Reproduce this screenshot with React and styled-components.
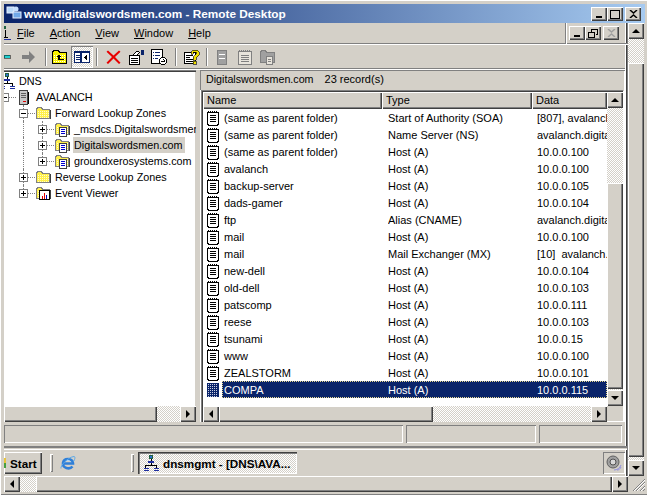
import React from "react";
import styled, { createGlobalStyle, css } from "styled-components";

const FACE = "#d4d0c8";
const NAVY = "#0a246a";

const GlobalStyle = createGlobalStyle`
  html, body {
    margin: 0;
    padding: 0;
    background: ${FACE};
    overflow: hidden;
  }
  * {
    box-sizing: border-box;
  }
`;

const raised = css`
  background-color: ${FACE};
  box-shadow: inset 1px 1px 0 #fff, inset -1px -1px 0 #404040, inset -2px -2px 0 #808080;
`;

const dither = css`
  background: repeating-conic-gradient(#fff 0 25%, ${FACE} 0 50%) 0 0 / 2px 2px;
`;

const Desktop = styled.div`
  position: relative;
  width: 647px;
  height: 495px;
  padding: 4px 2px 3px 4px;
  display: flex;
  flex-direction: column;
  overflow: hidden;
  background: ${FACE};
  box-shadow: inset 0 1px 0 #fff, inset 1px 0 0 #fff, inset 0 -1px 0 #808080;
  font-family: "Liberation Sans", Arial, sans-serif;
  font-size: 11px;
  color: #000;
`;

const TitleBar = styled.div`
  height: 19px;
  flex: none;
  display: flex;
  align-items: center;
  background: linear-gradient(90deg, ${NAVY} 0%, #a6caf0 100%);
  color: #fff;
  font-weight: 700;
  font-size: 11.8px;
  white-space: nowrap;
`;

const TitleIcon = styled.svg`
  width: 17px;
  height: 17px;
  margin: 0 1px 0 2px;
  flex: none;
`;

const TitleText = styled.span`
  flex: 1;
`;

const CaptionButtons = styled.div`
  display: flex;
  margin-right: 4px;
  align-items: center;
`;

const CaptionButton = styled.div`
  ${raised}
  width: 16px;
  height: 14px;
  margin-left: ${(p) => (p.$gap ? "2px" : "0")};
  display: flex;
  align-items: center;
  justify-content: center;
  flex: none;
`;

const Body = styled.div`
  height: 453px;
  flex: none;
  display: flex;
`;

const InnerWindow = styled.div`
  width: 624px;
  flex: none;
  display: flex;
  flex-direction: column;
  box-shadow: inset -1px 0 0 #808080, inset -2px 0 0 #404040, inset -3px 0 0 #fff;
`;

const MenuBar = styled.div`
  height: 21px;
  flex: none;
  display: flex;
  align-items: center;
  border-bottom: 1px solid #808080;
  box-shadow: 0 1px 0 #fff;
  padding-right: 6px;
`;

const MenuStub = styled.svg`
  width: 7px;
  height: 18px;
  flex: none;
`;

const MenuItem = styled.span`
  padding: 0 6px;
  margin-right: 3px;
  line-height: 14px;

  u {
    text-underline-offset: 1px;
  }
`;

const MdiButtons = styled.div`
  margin-left: auto;
  display: flex;
  height: 21px;
  align-items: center;
  border-left: 1px solid #808080;
  box-shadow: inset 1px 0 0 #fff;
  padding: 0 3px 0 3px;
`;

const ToolBar = styled.div`
  height: 24px;
  margin-top: 1px;
  flex: none;
  display: flex;
  align-items: center;
  border-bottom: 1px solid #808080;
  box-shadow: 0 1px 0 #fff;
  margin-right: 3px;
  overflow: hidden;
`;

const ToolIcon = styled.svg`
  width: ${(p) => p.$w || 16}px;
  height: 16px;
  flex: none;
  margin-left: ${(p) => p.$ml || 0}px;
`;

const ToolSep = styled.i`
  width: 2px;
  height: 18px;
  flex: none;
  margin-left: ${(p) => p.$ml || 0}px;
  background: linear-gradient(90deg, #808080 50%, #fff 50%);
`;

const ToggledTool = styled.div`
  ${dither}
  width: 22px;
  height: 22px;
  margin-left: 3px;
  flex: none;
  display: flex;
  align-items: center;
  justify-content: center;
  box-shadow: inset 1px 1px 0 #808080, inset -1px -1px 0 #fff;
`;

const Main = styled.div`
  height: 352px;
  margin-top: 1px;
  flex: none;
  display: flex;
  margin-right: 3px;
`;

const TreePane = styled.div`
  width: 192px;
  flex: none;
  display: flex;
  flex-direction: column;
  box-shadow: inset 0 1px 0 #808080, inset 0 2px 0 #404040;
  padding-top: 2px;
  font-size: 10.8px;
`;

const TreeScroller = styled.div`
  flex: 1;
  background: #fff;
  overflow: hidden;
  padding-top: 1px;
  box-shadow: inset -1px 0 0 ${FACE};
`;

const TreeRow = styled.div`
  height: 16px;
  display: flex;
  align-items: center;
  margin-left: ${(p) => p.$shift || 0}px;
  white-space: nowrap;
`;

const Guide = styled.span`
  width: 19px;
  height: 16px;
  flex: none;
  position: relative;

  &::after {
    content: "";
    display: ${(p) => (p.$line ? "block" : "none")};
    position: absolute;
    left: 9px;
    top: 0;
    bottom: 0;
    border-left: 1px dotted #808080;
  }
`;

const Expander = styled.span`
  width: 21px;
  height: 16px;
  flex: none;
  position: relative;

  &::before {
    content: "";
    position: absolute;
    left: 9px;
    top: 0;
    bottom: ${(p) => (p.$last ? "8px" : "0")};
    border-left: 1px dotted #808080;
    display: ${(p) => (p.$stem ? "block" : "none")};
  }

  &::after {
    content: "";
    position: absolute;
    left: 10px;
    right: 0;
    top: 8px;
    border-top: 1px dotted #808080;
  }
`;

const ExpanderBox = styled.span`
  position: absolute;
  z-index: 1;
  left: 5px;
  top: 4px;
  width: 9px;
  height: 9px;
  background: #fff;
  border: 1px solid #808080;

  &::before {
    content: "";
    position: absolute;
    left: 1px;
    top: 3px;
    width: 5px;
    height: 1px;
    background: #000;
  }

  &::after {
    content: "";
    position: absolute;
    left: 3px;
    top: 1px;
    width: 1px;
    height: 5px;
    background: #000;
    display: ${(p) => (p.$open ? "none" : "block")};
  }
`;

const TreeIcon = styled.svg`
  width: 16px;
  height: 16px;
  flex: none;
`;

const TreeLabel = styled.span`
  margin-left: 3px;
  padding: 0 1px;
  height: 16px;
  line-height: 16px;
  background: ${(p) => (p.$selected ? FACE : "transparent")};
  width: ${(p) => (p.$selected ? "112px" : "auto")};
`;

const HBar = styled.div`
  height: 16px;
  flex: ${(p) => (p.$fill ? "1" : "none")};
  margin-right: ${(p) => p.$mr || 0}px;
  display: flex;
  ${dither}
`;

const VBar = styled.div`
  width: 16px;
  flex: none;
  display: flex;
  flex-direction: column;
  ${dither}
`;

const ScrollThumb = styled.div`
  ${raised}
  flex: none;
  width: ${(p) => (p.$w ? `${p.$w}px` : "auto")};
  height: ${(p) => (p.$h ? `${p.$h}px` : "auto")};
  margin-left: ${(p) => p.$ml || 0}px;
  margin-top: ${(p) => p.$mt || 0}px;
`;

const ARROWS = {
  up: "border-width: 0 4px 4px; border-color: transparent transparent #000;",
  down: "border-width: 4px 4px 0; border-color: #000 transparent transparent;",
  left: "border-width: 4px 4px 4px 0; border-color: transparent #000 transparent transparent;",
  right: "border-width: 4px 0 4px 4px; border-color: transparent transparent transparent #000;",
};

const ArrowButton = styled.div`
  ${raised}
  width: 16px;
  height: 16px;
  flex: none;
  margin-left: ${(p) => (p.$end ? "auto" : "0")};
  margin-top: ${(p) => (p.$bottom ? "auto" : "0")};
  display: flex;
  align-items: center;
  justify-content: center;

  &::after {
    content: "";
    width: 0;
    height: 0;
    border-style: solid;
    ${(p) => ARROWS[p.$dir]}
  }
`;

const Splitter = styled.div`
  width: 4px;
  flex: none;
`;

const DetailPane = styled.div`
  flex: 1;
  min-width: 0;
  display: flex;
  flex-direction: column;
  box-shadow: inset 0 0 0 1px #fff;
`;

const Band = styled.div`
  height: 20px;
  flex: none;
  display: flex;
  align-items: center;
  padding: 0 0 2px 6px;
  box-shadow: inset 0 1px 0 #808080, inset 1px 0 0 #808080;
  white-space: pre;
  font-size: 10.7px;
`;

const BandCount = styled.span`
  margin-left: 11px;
  font-size: 11px;
`;

const ListFrame = styled.div`
  flex: 1;
  min-height: 0;
  margin-left: 1px;
  margin-right: 1px;
  border: 1px solid #808080;
  border-right-color: #fff;
  border-bottom: none;
  box-shadow: inset 1px 1px 0 #404040;
  padding: 1px 0 0 1px;
  display: flex;
  flex-direction: column;
`;

const ListArea = styled.div`
  flex: 1;
  min-height: 0;
  display: flex;
`;

const ListColumn = styled.div`
  flex: 1;
  min-width: 0;
  display: flex;
  flex-direction: column;
  background: #fff;
  overflow: hidden;
`;

const HeaderRow = styled.div`
  height: 17px;
  flex: none;
  display: flex;
`;

const HeaderCell = styled.div`
  ${raised}
  width: ${(p) => p.$w}px;
  flex: ${(p) => (p.$fill ? "1" : "none")};
  padding-left: 4px;
  line-height: 17px;
`;

const Row = styled.div`
  height: 17px;
  flex: none;
  display: flex;
  align-items: center;
  white-space: nowrap;
  padding-left: 3px;
`;

const RecordIcon = styled.svg`
  width: 14px;
  height: 16px;
  flex: none;
`;

const RowBody = styled.div`
  flex: 1;
  height: 17px;
  display: flex;
  align-items: center;
  margin-left: 2px;
  padding-left: 2px;
  min-width: 0;
  ${(p) =>
    p.$selected &&
    css`
      background: ${NAVY};
      color: #fff;
      outline: 1px dotted #e8d890;
      outline-offset: -1px;
    `}
`;

const NameCell = styled.span`
  width: 164px;
  flex: none;
`;

const TypeCell = styled.span`
  width: 149px;
  flex: none;
  overflow: hidden;
`;

const DataCell = styled.span`
  flex: 1;
  min-width: 0;
  overflow: hidden;
  white-space: pre;
`;

const StatusBar = styled.div`
  height: 23px;
  flex: none;
  margin-right: 3px;
  display: flex;
  gap: 3px;
  padding: 3px 3px 2px 0;
`;

const StatusPanel = styled.div`
  flex: ${(p) => (p.$w ? "none" : "1")};
  width: ${(p) => p.$w}px;
  box-shadow: inset 1px 1px 0 #808080, inset -1px -1px 0 #fff;
`;

const TaskBar = styled.div`
  flex: 1;
  min-height: 0;
  margin-top: 1px;
  margin-right: 1px;
  border-top: 2px solid #808080;
  box-shadow: inset 0 1px 0 ${FACE}, inset 0 2px 0 #fff;
  display: flex;
  align-items: center;
  padding: 2px 2px 0 0;
  font-size: 11.7px;
  font-weight: 700;
`;

const StartButton = styled.div`
  ${raised}
  width: 38px;
  height: 22px;
  flex: none;
  display: flex;
  align-items: center;
  padding-left: 6px;
  position: relative;

  &::before {
    content: "";
    position: absolute;
    left: 0;
    top: 6px;
    width: 2px;
    height: 10px;
    background: linear-gradient(#e9c43c 50%, #48a040 50%);
  }
`;

const TaskSep = styled.i`
  width: 3px;
  height: 18px;
  flex: none;
  margin-left: ${(p) => p.$ml}px;
  box-shadow: inset 1px 1px 0 #fff, inset -1px -1px 0 #808080;
`;

const IeIcon = styled.svg`
  width: 16px;
  height: 16px;
  flex: none;
  margin-left: 7px;
`;

const SnapIcon = styled.svg`
  flex: none;
`;

const TaskButton = styled.div`
  ${dither}
  width: 159px;
  height: 22px;
  flex: none;
  margin-left: 4px;
  display: flex;
  align-items: center;
  padding-left: 5px;
  box-shadow: inset 1px 1px 0 #404040, inset 2px 2px 0 #808080, inset -1px -1px 0 #fff;
  white-space: nowrap;
`;

const TaskLabel = styled.span`
  margin-left: 4px;
`;

const Tray = styled.div`
  width: 22px;
  height: 22px;
  flex: none;
  margin-left: auto;
  display: flex;
  align-items: center;
  justify-content: center;
  box-shadow: inset 1px 1px 0 #808080, inset -1px -1px 0 #fff;
`;

const BottomRow = styled.div`
  height: 16px;
  flex: none;
  display: flex;
`;

const Grip = styled.svg`
  width: 16px;
  height: 16px;
  flex: none;
  margin-left: 2px;
`;

const records = [
  ["(same as parent folder)", "Start of Authority (SOA)", "[807], avalanch.digitalswordsmen.com"],
  ["(same as parent folder)", "Name Server (NS)", "avalanch.digitalswordsmen.com"],
  ["(same as parent folder)", "Host (A)", "10.0.0.100"],
  ["avalanch", "Host (A)", "10.0.0.100"],
  ["backup-server", "Host (A)", "10.0.0.105"],
  ["dads-gamer", "Host (A)", "10.0.0.104"],
  ["ftp", "Alias (CNAME)", "avalanch.digitalswordsmen.com"],
  ["mail", "Host (A)", "10.0.0.100"],
  ["mail", "Mail Exchanger (MX)", "[10]  avalanch.digitalswordsmen.com"],
  ["new-dell", "Host (A)", "10.0.0.104"],
  ["old-dell", "Host (A)", "10.0.0.103"],
  ["patscomp", "Host (A)", "10.0.0.111"],
  ["reese", "Host (A)", "10.0.0.103"],
  ["tsunami", "Host (A)", "10.0.0.15"],
  ["www", "Host (A)", "10.0.0.100"],
  ["ZEALSTORM", "Host (A)", "10.0.0.101"],
  ["COMPA", "Host (A)", "10.0.0.115"],
];

const Doc = ({ selected }) => (
  <RecordIcon viewBox="0 0 14 16" shapeRendering="crispEdges">
    {selected ? (
      <>
        <rect x="1" y="1" width="12" height="14" fill={NAVY} />
        <path d="M2 2h10M2 4h10M2 6h10M2 8h10M2 10h10M2 12h10M2 14h10" stroke="#c8cce0" strokeDasharray="1 1" />
      </>
    ) : (
      <>
        <path d="M1.500 2.500h11v12h-1v1h-9v-1h-1z" fill="#fff" stroke="#000" />
        <path d="M2 1.500h10" stroke="#000" strokeDasharray="1 1" />
        <path d="M4 5.500h6M4 7.500h6M4 9.500h6M4 11.500h6" stroke="#000" />
      </>
    )}
  </RecordIcon>
);

const FolderPath = () => (
  <>
    <path d="M1.500 4.500l1-2h4l1 2h7v9h-13z" fill="#fff04a" stroke="#808080" />
    <path d="M3 6.500h11M3 8.500h11M3 10.500h11M3 12.500h11" stroke="#fffbd0" strokeDasharray="1 1" />
    <path d="M15.500 5v9" stroke="#404040" />
  </>
);

const Folder = () => (
  <TreeIcon viewBox="0 0 16 16" shapeRendering="crispEdges">
    <FolderPath />
  </TreeIcon>
);

const ZoneFolder = () => (
  <TreeIcon viewBox="0 0 16 16" shapeRendering="crispEdges">
    <FolderPath />
    <rect x="5.500" y="6.500" width="7" height="9" fill="#fff" stroke="#404040" />
    <path d="M7 8.500h4M7 10.500h4M7 12.500h4" stroke="#0000d0" />
  </TreeIcon>
);

const EventFolder = () => (
  <TreeIcon viewBox="0 0 16 16" shapeRendering="crispEdges">
    <FolderPath />
    <rect x="4.500" y="5.500" width="10" height="9" fill="#fff" stroke="#000" />
    <path d="M7.500 11v3" stroke="#e00000" />
    <path d="M9.500 8v6" stroke="#e00000" />
    <path d="M11.500 10v4" stroke="#0000c0" />
  </TreeIcon>
);

const ServerIcon = () => (
  <TreeIcon viewBox="0 0 16 16" shapeRendering="crispEdges">
    <path d="M3.500 1.500h8v14h-8z" fill="#c8c8c8" stroke="#404040" />
    <path d="M5 4.500h5M5 6.500h5M5 8.500h5" stroke="#606060" />
    <path d="M12.500 3v12" stroke="#000" />
    <rect x="7" y="12" width="3" height="1" fill="#e00000" />
  </TreeIcon>
);

const DnsIcon = ({ size = 16 }) => (
  <SnapIcon width={size} height={size} viewBox="0 0 16 16" shapeRendering="crispEdges">
    <rect x="6" y="0" width="4" height="4" fill="#206040" />
    <rect x="7" y="1" width="2" height="2" fill="#3070d0" />
    <path d="M8 4v7M2.500 11v3M13.500 11v3M2 10.500h12" stroke="#000" />
    <path d="M5 6.500h6" stroke="#2030a0" strokeWidth="2" />
    <path d="M0.500 15.500h5M10.500 15.500h5" stroke="#2030a0" />
    <path d="M0.500 13.500h5M10.500 13.500h5" stroke="#2030a0" />
  </SnapIcon>
);

const StubIcon = () => (
  <MenuStub viewBox="0 0 7 18" shapeRendering="crispEdges">
    <rect x="0" y="2" width="2" height="3" fill="#206040" />
    <path d="M1.500 6v7" stroke="#000" />
    <path d="M0 15.500h7" stroke="#2030a0" />
    <path d="M0 13.500h4" stroke="#000" />
  </MenuStub>
);

const Tools = () => (
  <ToolBar>
    <ToolIcon $w={7} viewBox="0 0 7 16" shapeRendering="crispEdges">
      <rect x="0" y="6" width="6" height="3" fill="#20d0d0" stroke="#000" strokeWidth="0.5" />
    </ToolIcon>
    <ToolIcon $ml={10} viewBox="0 0 16 16">
      <path d="M1 6h7V2l6 6-6 6v-4H1z" fill="#808080" />
    </ToolIcon>
    <ToolSep $ml={8} />
    <ToolIcon $ml={5} viewBox="0 0 16 16" shapeRendering="crispEdges">
      <path d="M0.500 3.500l1-2h5l1 2h7v11h-14z" fill="#f8f000" stroke="#000" />
      <path d="M2 6.500h12M2 8.500h12M2 10.500h12M2 12.500h12" stroke="#fff" strokeDasharray="1 1" />
      <path d="M7 5l-3 3h2v3h6v-1.500H7.500V8h2z" fill="#000" />
    </ToolIcon>
    <ToggledTool>
      <ToolIcon viewBox="0 0 16 16" shapeRendering="crispEdges">
        <rect x="0.500" y="2.500" width="15" height="11" fill="#fff" stroke={NAVY} />
        <rect x="0" y="2" width="16" height="2" fill={NAVY} />
        <path d="M7 3v11" stroke={NAVY} strokeWidth="2" />
        <path d="M2 6.500h4M2 8.500h4M2 10.500h4" stroke={NAVY} />
        <path d="M13 6v5l-3-2.500z" fill="#000" />
      </ToolIcon>
    </ToggledTool>
    <ToolSep $ml={3} />
    <ToolIcon $ml={8} viewBox="0 0 16 16">
      <path d="M2 1.500l5.500 5 5.500-5 1.500 1.300-5.500 5.200 5.500 5.700-1.500 1.300-5.500-5.500-5.500 5.500-1.500-1.300 5.500-5.700-5.500-5.200z" fill="#e80000" />
    </ToolIcon>
    <ToolIcon $ml={6} viewBox="0 0 16 16" shapeRendering="crispEdges">
      <path d="M1.500 6.500h10v9h-10z" fill="#fff" stroke="#000" />
      <path d="M3 9.500h7M3 11.500h7M3 13.500h7" stroke="#000" />
      <path d="M4.500 6.500l4-4h2l1 1 -3 3z" fill="#fff" stroke="#000" />
      <rect x="13" y="1" width="3" height="5" fill={NAVY} />
    </ToolIcon>
    <ToolIcon $ml={7} viewBox="0 0 16 16" shapeRendering="crispEdges">
      <path d="M0.500 0.500h11v14h-11z" fill="#fff" stroke="#000" />
      <path d="M2 3.500h1M2 6.500h1M2 9.500h1" stroke={NAVY} />
      <path d="M4 3.500h5M4 6.500h5M4 9.500h3" stroke={NAVY} />
      <circle cx="12" cy="12" r="3.500" fill="#fff" stroke="#000" />
      <path d="M10 12h4M12.500 10.500l1.500 1.500-1.500 1.500" stroke="#000" fill="none" />
    </ToolIcon>
    <ToolSep $ml={8} />
    <ToolIcon $ml={7} viewBox="0 0 16 16" shapeRendering="crispEdges">
      <path d="M0.500 3.500h11v11h-11z" fill="#fff" stroke="#000" />
      <path d="M2 6.500h7M2 8.500h4M2 10.500h7M2 12.500h7" stroke="#000" />
      <path d="M7 3l2-2h4l2 2v3l-3 3v2h-3V8l3-3V3h-3v2H7z" fill="#f0e000" stroke="#000" strokeWidth="0.6" />
      <rect x="9" y="12" width="3" height="3" fill="#f0e000" stroke="#000" strokeWidth="0.6" />
    </ToolIcon>
    <ToolSep $ml={6} />
    <ToolIcon $ml={7} viewBox="0 0 16 16" shapeRendering="crispEdges">
      <path d="M2.500 1.500h9v14h-9z" fill="#a0a0a0" stroke="#808080" />
      <path d="M4 5.500h6M4 9.500h6" stroke="#fff" />
    </ToolIcon>
    <ToolIcon $ml={6} viewBox="0 0 16 16" shapeRendering="crispEdges">
      <path d="M1.500 2.500h13v13h-13z" fill="#e8e4dc" stroke="#808080" />
      <path d="M2 1.500h12" stroke="#808080" strokeDasharray="1 1" />
      <path d="M4 6.500h8M4 8.500h8M4 10.500h8M4 12.500h8" stroke="#808080" />
    </ToolIcon>
    <ToolIcon $ml={7} viewBox="0 0 16 16" shapeRendering="crispEdges">
      <path d="M0.500 3.500l1-2h4l1 2h8v10h-14z" fill="#a0a0a0" stroke="#808080" />
      <path d="M6.500 7.500h6v8h-6z" fill="#e8e4dc" stroke="#808080" />
      <path d="M8 10.500h3M8 12.500h3" stroke="#808080" />
    </ToolIcon>
  </ToolBar>
);

const Tree = () => (
  <TreePane>
    <TreeScroller>
      <TreeRow $shift={-5}>
        <DnsIcon />
        <TreeLabel>DNS</TreeLabel>
      </TreeRow>
      <TreeRow $shift={-9}>
        <Expander><ExpanderBox $open /></Expander>
        <ServerIcon />
        <TreeLabel>AVALANCH</TreeLabel>
      </TreeRow>
      <TreeRow $shift={-9}>
        <Guide />
        <Expander $stem><ExpanderBox $open /></Expander>
        <Folder />
        <TreeLabel>Forward Lookup Zones</TreeLabel>
      </TreeRow>
      <TreeRow $shift={-9}>
        <Guide />
        <Guide $line />
        <Expander $stem><ExpanderBox /></Expander>
        <ZoneFolder />
        <TreeLabel>_msdcs.Digitalswordsmen.com</TreeLabel>
      </TreeRow>
      <TreeRow $shift={-9}>
        <Guide />
        <Guide $line />
        <Expander $stem><ExpanderBox /></Expander>
        <ZoneFolder />
        <TreeLabel $selected>Digitalswordsmen.com</TreeLabel>
      </TreeRow>
      <TreeRow $shift={-9}>
        <Guide />
        <Guide $line />
        <Expander $stem $last><ExpanderBox /></Expander>
        <ZoneFolder />
        <TreeLabel>groundxerosystems.com</TreeLabel>
      </TreeRow>
      <TreeRow $shift={-9}>
        <Guide />
        <Expander $stem><ExpanderBox /></Expander>
        <Folder />
        <TreeLabel>Reverse Lookup Zones</TreeLabel>
      </TreeRow>
      <TreeRow $shift={-9}>
        <Guide />
        <Expander $stem $last><ExpanderBox /></Expander>
        <EventFolder />
        <TreeLabel>Event Viewer</TreeLabel>
      </TreeRow>
    </TreeScroller>
    <HBar>
      <ScrollThumb $w={153} />
      <ArrowButton $dir="right" $end />
    </HBar>
  </TreePane>
);

const Details = () => (
  <DetailPane>
    <Band>
      Digitalswordsmen.com
      <BandCount>23 record(s)</BandCount>
    </Band>
    <ListFrame>
      <ListArea>
        <ListColumn>
          <HeaderRow>
            <HeaderCell $w={179}>Name</HeaderCell>
            <HeaderCell $w={150}>Type</HeaderCell>
            <HeaderCell $fill>Data</HeaderCell>
          </HeaderRow>
          {records.map(([name, type, data], i) => {
            const selected = i === records.length - 1;
            return (
              <Row key={i}>
                <Doc selected={selected} />
                <RowBody $selected={selected}>
                  <NameCell>{name}</NameCell>
                  <TypeCell>{type}</TypeCell>
                  <DataCell>{data}</DataCell>
                </RowBody>
              </Row>
            );
          })}
        </ListColumn>
        <VBar>
          <ArrowButton $dir="up" />
          <ScrollThumb $h={206} $mt={75} />
          <ArrowButton $dir="down" $bottom />
        </VBar>
      </ListArea>
      <HBar $mr={16}>
        <ArrowButton $dir="left" />
        <ScrollThumb $w={214} />
        <ArrowButton $dir="right" $end />
      </HBar>
    </ListFrame>
  </DetailPane>
);

export default function App() {
  return (
    <>
      <GlobalStyle />
      <Desktop>
        <TitleBar>
          <TitleIcon viewBox="0 0 17 17">
            <rect x="1" y="2" width="7" height="6" fill="#b8d8f8" stroke="#e8f0ff" />
            <rect x="7" y="7" width="8" height="6" fill="#70a8e8" stroke="#e8f0ff" />
            <circle cx="10" cy="4" r="2.500" fill="#c8e0ff" />
          </TitleIcon>
          <TitleText>www.digitalswordsmen.com - Remote Desktop</TitleText>
          <CaptionButtons>
            <CaptionButton>
              <svg width="8" height="8" shapeRendering="crispEdges"><path d="M1 6h6v2H1z" fill="#000" /></svg>
            </CaptionButton>
            <CaptionButton>
              <svg width="10" height="10" shapeRendering="crispEdges"><path d="M0.500 1.500h9v8h-9zM0 1h10" fill="none" stroke="#000" /></svg>
            </CaptionButton>
            <CaptionButton $gap>
              <svg width="9" height="8"><path d="M1 0l3.500 3L8 0M1 8l3.500-3L8 8" fill="none" stroke="#000" strokeWidth="1.500" /></svg>
            </CaptionButton>
          </CaptionButtons>
        </TitleBar>
        <Body>
          <InnerWindow>
            <MenuBar>
              <StubIcon />
              <MenuItem><u>F</u>ile</MenuItem>
              <MenuItem><u>A</u>ction</MenuItem>
              <MenuItem><u>V</u>iew</MenuItem>
              <MenuItem><u>W</u>indow</MenuItem>
              <MenuItem><u>H</u>elp</MenuItem>
              <MdiButtons>
                <CaptionButton>
                  <svg width="8" height="8" shapeRendering="crispEdges"><path d="M1 6h6v2H1z" fill="#000" /></svg>
                </CaptionButton>
                <CaptionButton>
                  <svg width="10" height="9" shapeRendering="crispEdges"><path d="M3.500 2.500V0.500h6v5h-2M0.500 3.500h6v5h-6z" fill="none" stroke="#000" /></svg>
                </CaptionButton>
                <CaptionButton $gap>
                  <svg width="9" height="8"><path d="M1 0l3.500 3L8 0M1 8l3.500-3L8 8" fill="none" stroke="#a0a0a0" strokeWidth="1.500" /></svg>
                </CaptionButton>
              </MdiButtons>
            </MenuBar>
            <Tools />
            <Main>
              <Tree />
              <Splitter />
              <Details />
            </Main>
            <StatusBar>
              <StatusPanel />
              <StatusPanel $w={130} />
              <StatusPanel $w={83} />
            </StatusBar>
            <TaskBar>
              <StartButton>Start</StartButton>
              <TaskSep $ml={8} />
              <IeIcon viewBox="0 0 16 16">
                <path d="M3.500 8.500h9.500C13 3 4 2.500 3 8c-.7 5 6.500 7 9.500 3.500" fill="none" stroke="#2f7fd8" strokeWidth="2.600" />
                <path d="M5.500 6.500C6.500 5 9.500 5 10.500 6.500" fill="none" stroke="#a8d4f8" />
                <path d="M1 13.500C0 11 8 2 14 1.500c1.500 0 1 3-.5 5" fill="none" stroke="#5aa8e8" />
              </IeIcon>
              <TaskSep $ml={55} />
              <TaskButton>
                <DnsIcon />
                <TaskLabel>dnsmgmt - [DNS\AVA...</TaskLabel>
              </TaskButton>
              <Tray>
                <svg width="18" height="18" viewBox="0 0 18 18">
                  <circle cx="8" cy="8" r="6" fill="#a0a0a0" stroke="#606060" />
                  <circle cx="8" cy="8" r="3" fill="#d8d8d8" stroke="#505050" />
                  <path d="M9 16c3 0 6-2 7-5M12 16c2 0 3-1 4-3" fill="none" stroke="#9090e0" />
                </svg>
              </Tray>
            </TaskBar>
          </InnerWindow>
          <VBar>
            <ArrowButton $dir="up" />
            <ScrollThumb $h={394} $mt={24} />
            <ArrowButton $dir="down" $bottom />
          </VBar>
        </Body>
        <BottomRow>
          <HBar $fill>
            <ArrowButton $dir="left" />
            <ScrollThumb $w={576} $ml={16} />
            <ArrowButton $dir="right" $end />
          </HBar>
          <Grip viewBox="0 0 16 16">
            <path d="M15 3L3 15M15 6L6 15M15 10L10 15M15 13L13 15" stroke="#808080" fill="none" />
            <path d="M15 4L4 15M15 7L7 15M15 11L11 15" stroke="#fff" fill="none" />
          </Grip>
        </BottomRow>
      </Desktop>
    </>
  );
}
